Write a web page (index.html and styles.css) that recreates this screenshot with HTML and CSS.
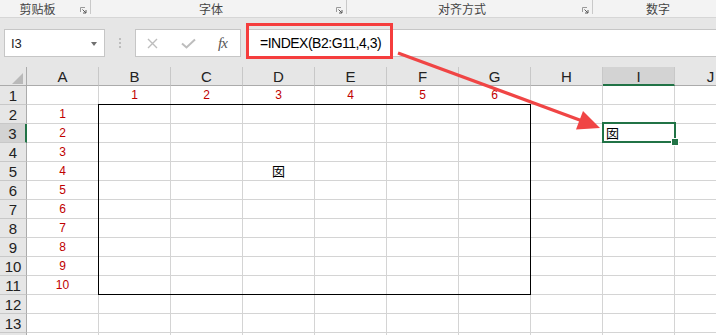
FILE: index.html
```html
<!DOCTYPE html>
<html lang="zh-CN">
<head>
    <meta charset="UTF-8">
    <meta name="viewport" content="width=device-width, initial-scale=1.0">
    <title>INDEX 函数示例</title>
    <link rel="stylesheet" href="styles.css">
</head>
<body>
    <div class="app">
        <!-- Ribbon group labels -->
        <div class="ribbon">
            <div class="group group-clipboard">
                <span class="group-label">剪贴板</span>
                <span class="launcher"><svg width="7" height="7" viewBox="0 0 7 7"><path d="M0.5 5V0.5H5" fill="none" stroke="#9a9a9a"/><path d="M2.5 2.5L6 6M6 3V6H3" fill="none" stroke="#5a5a5a"/></svg></span>
            </div>
            <div class="group group-font">
                <span class="group-label">字体</span>
                <span class="launcher"><svg width="7" height="7" viewBox="0 0 7 7"><path d="M0.5 5V0.5H5" fill="none" stroke="#9a9a9a"/><path d="M2.5 2.5L6 6M6 3V6H3" fill="none" stroke="#5a5a5a"/></svg></span>
            </div>
            <div class="group group-align">
                <span class="group-label">对齐方式</span>
                <span class="launcher"><svg width="7" height="7" viewBox="0 0 7 7"><path d="M0.5 5V0.5H5" fill="none" stroke="#9a9a9a"/><path d="M2.5 2.5L6 6M6 3V6H3" fill="none" stroke="#5a5a5a"/></svg></span>
            </div>
            <div class="group group-number">
                <span class="group-label">数字</span>
                <span class="launcher"></span>
            </div>
        </div>

        <!-- Formula bar -->
        <div class="formula-band">
            <div class="name-box">
                <span>I3</span>
                <span class="caret"></span>
            </div>
            <div class="grip"><i></i><i></i><i></i></div>
            <div class="fx-box">
                <svg class="fx-icon" width="11" height="11" viewBox="0 0 11 11"><path d="M1 1L10 10M10 1L1 10" stroke="#bdbdbd" stroke-width="1.4"/></svg>
                <svg class="fx-icon" width="15" height="11" viewBox="0 0 15 11"><path d="M1 5.5L5.5 9.5L14 1.5" fill="none" stroke="#bdbdbd" stroke-width="2"/></svg>
                <span class="fx-label">fx</span>
            </div>
            <div class="formula-input">=INDEX(B2:G11,4,3)</div>
        </div>

        <!-- Worksheet -->
        <div class="sheet" id="sheet">
            <div class="range-border"></div>
            <div class="selection"><span class="fill-handle"></span></div>
        </div>

        <!-- Annotation -->
        <div class="callout"></div>
        <svg class="arrow" width="716" height="335" viewBox="0 0 716 335">
            <line x1="398" y1="53" x2="581" y2="120.5" stroke="#f04545" stroke-width="3.2"/>
            <polygon points="600,128 576,129.5 583,111" fill="#f04545"/>
        </svg>
    </div>

    <script>
        const COLS = ['A', 'B', 'C', 'D', 'E', 'F', 'G', 'H', 'I', 'J'];
        const ROW_COUNT = 14;
        const LABELLED_ROWS = 13;
        const ACTIVE_COL = 'I';
        const ACTIVE_ROW = 3;

        const values = {
            B1: '1', C1: '2', D1: '3', E1: '4', F1: '5', G1: '6',
            A2: '1', A3: '2', A4: '3', A5: '4', A6: '5',
            A7: '6', A8: '7', A9: '8', A10: '9', A11: '10',
            D5: '囡', I3: '囡'
        };

        const sheet = document.getElementById('sheet');

        function addCell(row, col, className, text) {
            const el = document.createElement('div');
            el.className = className;
            el.style.gridArea = (row + 1) + ' / ' + (col + 1);
            el.textContent = text || '';
            sheet.appendChild(el);
        }

        // header row
        addCell(0, 0, 'corner');
        COLS.forEach((name, i) => {
            const cls = name === ACTIVE_COL ? 'col-head active' : 'col-head';
            addCell(0, i + 1, cls, name);
        });

        // body rows (the last one is only a sliver at the window edge)
        for (let r = 1; r <= ROW_COUNT; r++) {
            const label = r <= LABELLED_ROWS ? String(r) : '';
            addCell(r, 0, r === ACTIVE_ROW ? 'row-head active' : 'row-head', label);
            COLS.forEach((name, i) => {
                const key = name + r;
                let cls = 'cell';
                if (key === 'I3') cls += ' cell-text cell-left';
                else if (key === 'D5') cls += ' cell-text';
                addCell(r, i + 1, cls, values[key]);
            });
        }
    </script>
</body>
</html>
```

FILE: styles.css
```css
/* Global */
body {
    margin: 0;
    font-family: 'Liberation Sans', 'Noto Sans CJK SC', sans-serif;
    background: #ffffff;
    color: #000;
    overflow: hidden;
}

.app {
    position: relative;
    width: 716px;
    height: 335px;
    overflow: hidden;
}

/* Ribbon */
.ribbon {
    display: flex;
    height: 17px;
    background: #f3f3f3;
    border-bottom: 1px solid #d6d6d6;
    overflow: hidden;
}

.group {
    display: flex;
    align-items: center;
    flex-shrink: 0;
    position: relative;
}

.group::after {
    content: '';
    position: absolute;
    right: 0;
    top: 0;
    height: 14px;
    border-right: 1px solid #c9c9c9;
}

.group-clipboard { width: 91px; }
.group-font { width: 256px; }
.group-align { width: 246px; }
.group-number { width: 146px; }

.group-label {
    flex: 1;
    text-align: center;
    font-family: 'Noto Sans CJK SC', sans-serif;
    font-size: 12px;
    line-height: 17px;
    color: #444;
}

.launcher {
    width: 16px;
    display: flex;
    justify-content: center;
    padding-top: 3px;
}

/* Formula bar */
.formula-band {
    display: flex;
    align-items: flex-start;
    height: 49px;
    box-sizing: border-box;
    padding: 11px 0 0 4px;
    background: #e6e6e6;
}

.name-box {
    display: flex;
    align-items: center;
    justify-content: space-between;
    width: 101px;
    height: 28px;
    box-sizing: border-box;
    padding: 0 7px 0 6px;
    background: #fff;
    border: 1px solid #c6c6c6;
    font-size: 13px;
    color: #222;
}

.caret {
    width: 0;
    height: 0;
    border-left: 3px solid transparent;
    border-right: 3px solid transparent;
    border-top: 4px solid #707070;
    margin-top: 1px;
}

.grip {
    width: 30px;
    height: 28px;
    display: flex;
    flex-direction: column;
    align-items: center;
    justify-content: center;
    gap: 2px;
}

.grip i {
    display: block;
    width: 2px;
    height: 2px;
    background: #bdbdbd;
}

.fx-box {
    display: flex;
    align-items: center;
    justify-content: space-around;
    width: 106px;
    height: 28px;
    box-sizing: border-box;
    background: #fff;
    border: 1px solid #c6c6c6;
    margin-right: 6px;
}

.fx-label {
    font-family: 'Liberation Serif', serif;
    font-style: italic;
    font-size: 15px;
    letter-spacing: -1px;
    color: #555;
    padding-right: 2px;
}

.formula-input {
    flex: 1;
    height: 28px;
    box-sizing: border-box;
    background: #fff;
    border: 1px solid #c6c6c6;
    border-right: none;
    padding-left: 12px;
    font-size: 14px;
    letter-spacing: -0.5px;
    line-height: 27px;
    color: #000;
    white-space: nowrap;
}

/* Worksheet grid */
.sheet {
    display: grid;
    grid-template-columns: 27px repeat(10, 72px);
    grid-template-rows: repeat(15, 19px);
    height: 268px;
    overflow: hidden;
}

.sheet > div {
    box-sizing: border-box;
    min-width: 0;
    overflow: hidden;
    white-space: nowrap;
}

.corner {
    background: #e6e6e6;
    border-right: 1px solid #ababab;
    border-bottom: 1px solid #ababab;
    position: relative;
}

.corner::after {
    content: '';
    position: absolute;
    left: 12px;
    top: 6px;
    width: 11px;
    height: 11px;
    background: #b9b9b9;
    clip-path: polygon(100% 0, 100% 100%, 0 100%);
}

.col-head {
    background: #e6e6e6;
    border-right: 1px solid #c8c8c8;
    border-bottom: 1px solid #ababab;
    text-align: center;
    font-size: 15px;
    line-height: 16px;
    padding-top: 2px;
    color: #222;
}

.col-head.active {
    background: #d3d3d3;
    border-bottom: 2px solid #217346;
}

.row-head {
    background: #e6e6e6;
    border-right: 1px solid #ababab;
    border-bottom: 1px solid #c8c8c8;
    text-align: center;
    font-size: 15px;
    line-height: 16px;
    padding-top: 2px;
    color: #222;
}

.row-head.active {
    background: #d3d3d3;
    border-right: 2px solid #217346;
}

.cell {
    border-right: 1px solid #d4d4d4;
    border-bottom: 1px solid #d4d4d4;
    text-align: center;
    font-size: 12px;
    line-height: 18px;
    color: #c00000;
}

.cell-text {
    font-family: 'Noto Sans CJK SC', sans-serif;
    font-size: 13px;
    color: #000;
}

.cell-left {
    text-align: left;
    padding-left: 3px;
}

.range-border {
    grid-area: 3 / 3 / 13 / 9;
    border: 1px solid #000;
    margin: -1px 0 0 -1px;
    z-index: 1;
    pointer-events: none;
}

.selection {
    grid-area: 4 / 10;
    border: 2px solid #217346;
    margin: -2px -1px 0 -1px;
    z-index: 2;
    position: relative;
    overflow: visible !important;
}

.fill-handle {
    position: absolute;
    right: -4px;
    bottom: -4px;
    width: 6px;
    height: 6px;
    background: #217346;
    box-shadow: 0 0 0 1px #fff;
}

/* Annotation overlay */
.callout {
    position: absolute;
    left: 246px;
    top: 23px;
    width: 147px;
    height: 36px;
    box-sizing: border-box;
    border: 3px solid #f53d3d;
}

.arrow {
    position: absolute;
    left: 0;
    top: 0;
    pointer-events: none;
}
```
